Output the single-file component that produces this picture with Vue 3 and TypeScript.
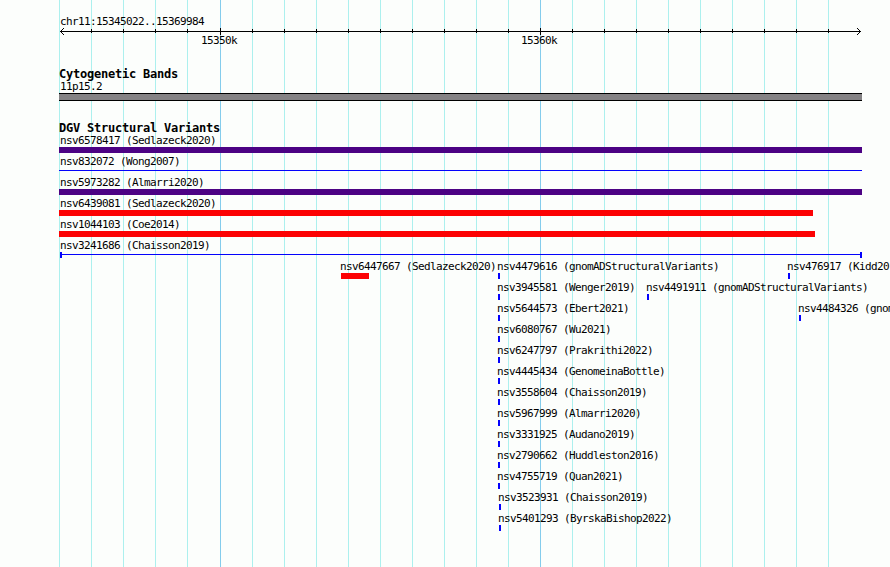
<script setup lang="ts">
interface Feature {
  name: string;
  start: number;
  end: number;
  kind: "loss" | "complex" | "line" | "range" | "point";
}

const panelLeft = 59;
const panelRight = 862;

const ticks = Array.from({ length: 25 }, (_, i) => ({
  x: i < 5 ? panelLeft + i * 32 : 220 + (i - 5) * 32,
  major: i === 5 || i === 15,
}));

const full = (name: string, kind: Feature["kind"], end = panelRight): Feature[] => [
  { name, start: panelLeft, end, kind },
];

const point = (name: string, start = 498): Feature => ({
  name,
  start,
  end: start + 2,
  kind: "point",
});

const lanes: Feature[][] = [
  full("nsv6578417 (Sedlazeck2020)", "complex"),
  full("nsv832072 (Wong2007)", "line"),
  full("nsv5973282 (Almarri2020)", "complex"),
  full("nsv6439081 (Sedlazeck2020)", "loss", 813),
  full("nsv1044103 (Coe2014)", "loss", 815),
  full("nsv3241686 (Chaisson2019)", "range"),
  [
    { name: "nsv6447667 (Sedlazeck2020)", start: 341, end: 369, kind: "loss" },
    point("nsv4479616 (gnomADStructuralVariants)"),
    point("nsv476917 (Kidd20", 788),
  ],
  [point("nsv3945581 (Wenger2019)"), point("nsv4491911 (gnomADStructuralVariants)", 647)],
  [point("nsv5644573 (Ebert2021)"), point("nsv4484326 (gnom", 799)],
  [point("nsv6080767 (Wu2021)")],
  [point("nsv6247797 (Prakrithi2022)")],
  [point("nsv4445434 (GenomeinaBottle)")],
  [point("nsv3558604 (Chaisson2019)")],
  [point("nsv5967999 (Almarri2020)")],
  [point("nsv3331925 (Audano2019)")],
  [point("nsv2790662 (Huddleston2016)")],
  [point("nsv4755719 (Quan2021)")],
  [point("nsv3523931 (Chaisson2019)", 499)],
  [point("nsv5401293 (ByrskaBishop2022)", 499)],
];

// Each feature is offset from the end of the one before it in the lane
function placement(lane: Feature[], i: number) {
  const previous = i === 0 ? 0 : lane[i - 1].end;
  return {
    marginLeft: `${lane[i].start - previous}px`,
    width: `${lane[i].end - lane[i].start}px`,
  };
}
</script>

<template>
  <main class="browser">
    <svg class="gridlines" width="890" height="567" shape-rendering="crispEdges">
      <rect
        v-for="tick in ticks"
        :key="tick.x"
        :x="tick.x"
        y="0"
        width="1"
        height="567"
        :class="tick.major ? 'major' : 'minor'"
      />
    </svg>

    <div class="tracks">
      <header class="ruler">
        <div class="label region">chr11:15345022..15369984</div>
        <svg class="axis" width="890" height="7" shape-rendering="crispEdges">
          <rect x="60" y="3" width="801" height="1" />
          <template v-for="tick in ticks.slice(1)" :key="tick.x">
            <rect
              :x="tick.x"
              :y="tick.major ? 0 : 1"
              width="1"
              :height="tick.major ? 7 : 4"
            />
          </template>
          <path d="M61 2h1v3h-1zM62 1h1v1h-1zM62 5h1v1h-1zM63 0h1v1h-1zM63 6h1v1h-1z" />
          <path d="M859 2h1v3h-1zM858 1h1v1h-1zM858 5h1v1h-1zM857 0h1v1h-1zM857 6h1v1h-1z" />
        </svg>
        <div class="scale">
          <span class="label">15350k</span>
          <span class="label">15360k</span>
        </div>
      </header>

      <section class="track cytobands">
        <h2>Cytogenetic Bands</h2>
        <div class="label">11p15.2</div>
        <div class="band"></div>
      </section>

      <section class="track variants">
        <h2>DGV Structural Variants</h2>
        <div v-for="(lane, n) in lanes" :key="n" class="lane">
          <div
            v-for="(feature, i) in lane"
            :key="feature.name"
            class="feature"
            :class="{ inset: feature.start > panelLeft }"
            :style="placement(lane, i)"
          >
            <div class="label">{{ feature.name }}</div>
            <div class="glyph" :class="feature.kind"></div>
          </div>
        </div>
      </section>
    </div>
  </main>
</template>

<style>
body {
  background: #fcfefc;
  overflow: hidden;
}
</style>

<style scoped>
.browser {
  display: grid;
  width: 890px;
  height: 567px;
  overflow: hidden;
  background: #fcfefc;
  color: #000;
  font-family: "DejaVu Sans Mono", monospace;
}

.gridlines,
.tracks {
  grid-area: 1 / 1;
  display: block;
}

.minor {
  fill: #acf0ee;
}

.major {
  fill: #84ccec;
}

.label {
  height: 13px;
  padding-left: 1px;
  font-size: 11px;
  line-height: 13px;
  letter-spacing: -0.622px;
  white-space: nowrap;
}

.ruler {
  padding-top: 15px;
}

.region {
  margin-left: 59px;
}

.axis {
  display: block;
}

.scale {
  display: flex;
  gap: 283px;
  height: 13px;
  margin-top: -1px;
  padding-left: 200px;
}

.scale .label {
  width: 36px;
}

h2 {
  height: 12px;
  margin: 0;
  font-size: 12px;
  font-weight: bold;
  line-height: 12px;
  letter-spacing: -0.224px;
  white-space: nowrap;
}

.track {
  padding-left: 59px;
}

.cytobands {
  padding-top: 21px;
}

.band {
  box-sizing: border-box;
  width: 803px;
  height: 8px;
  border: solid #000;
  border-width: 1px 0;
  background: #848284;
}

.variants {
  padding: 21px 0 0;
}

.variants h2 {
  padding-left: 59px;
}

.lane {
  display: flex;
  height: 21px;
}

.feature {
  flex: none;
}

.inset .label {
  margin-left: -1px;
  padding-left: 0;
}

.glyph {
  height: 6px;
}

.loss {
  background: #fc0204;
}

.complex {
  background: #4c0284;
}

.point {
  background: #0402fc;
}

.line,
.range {
  background: linear-gradient(#0402fc, #0402fc) 0 2px / 100% 1px no-repeat;
}

.range {
  box-sizing: border-box;
  margin-left: 1px;
  border: solid #0402fc;
  border-width: 0 2px;
}
</style>
